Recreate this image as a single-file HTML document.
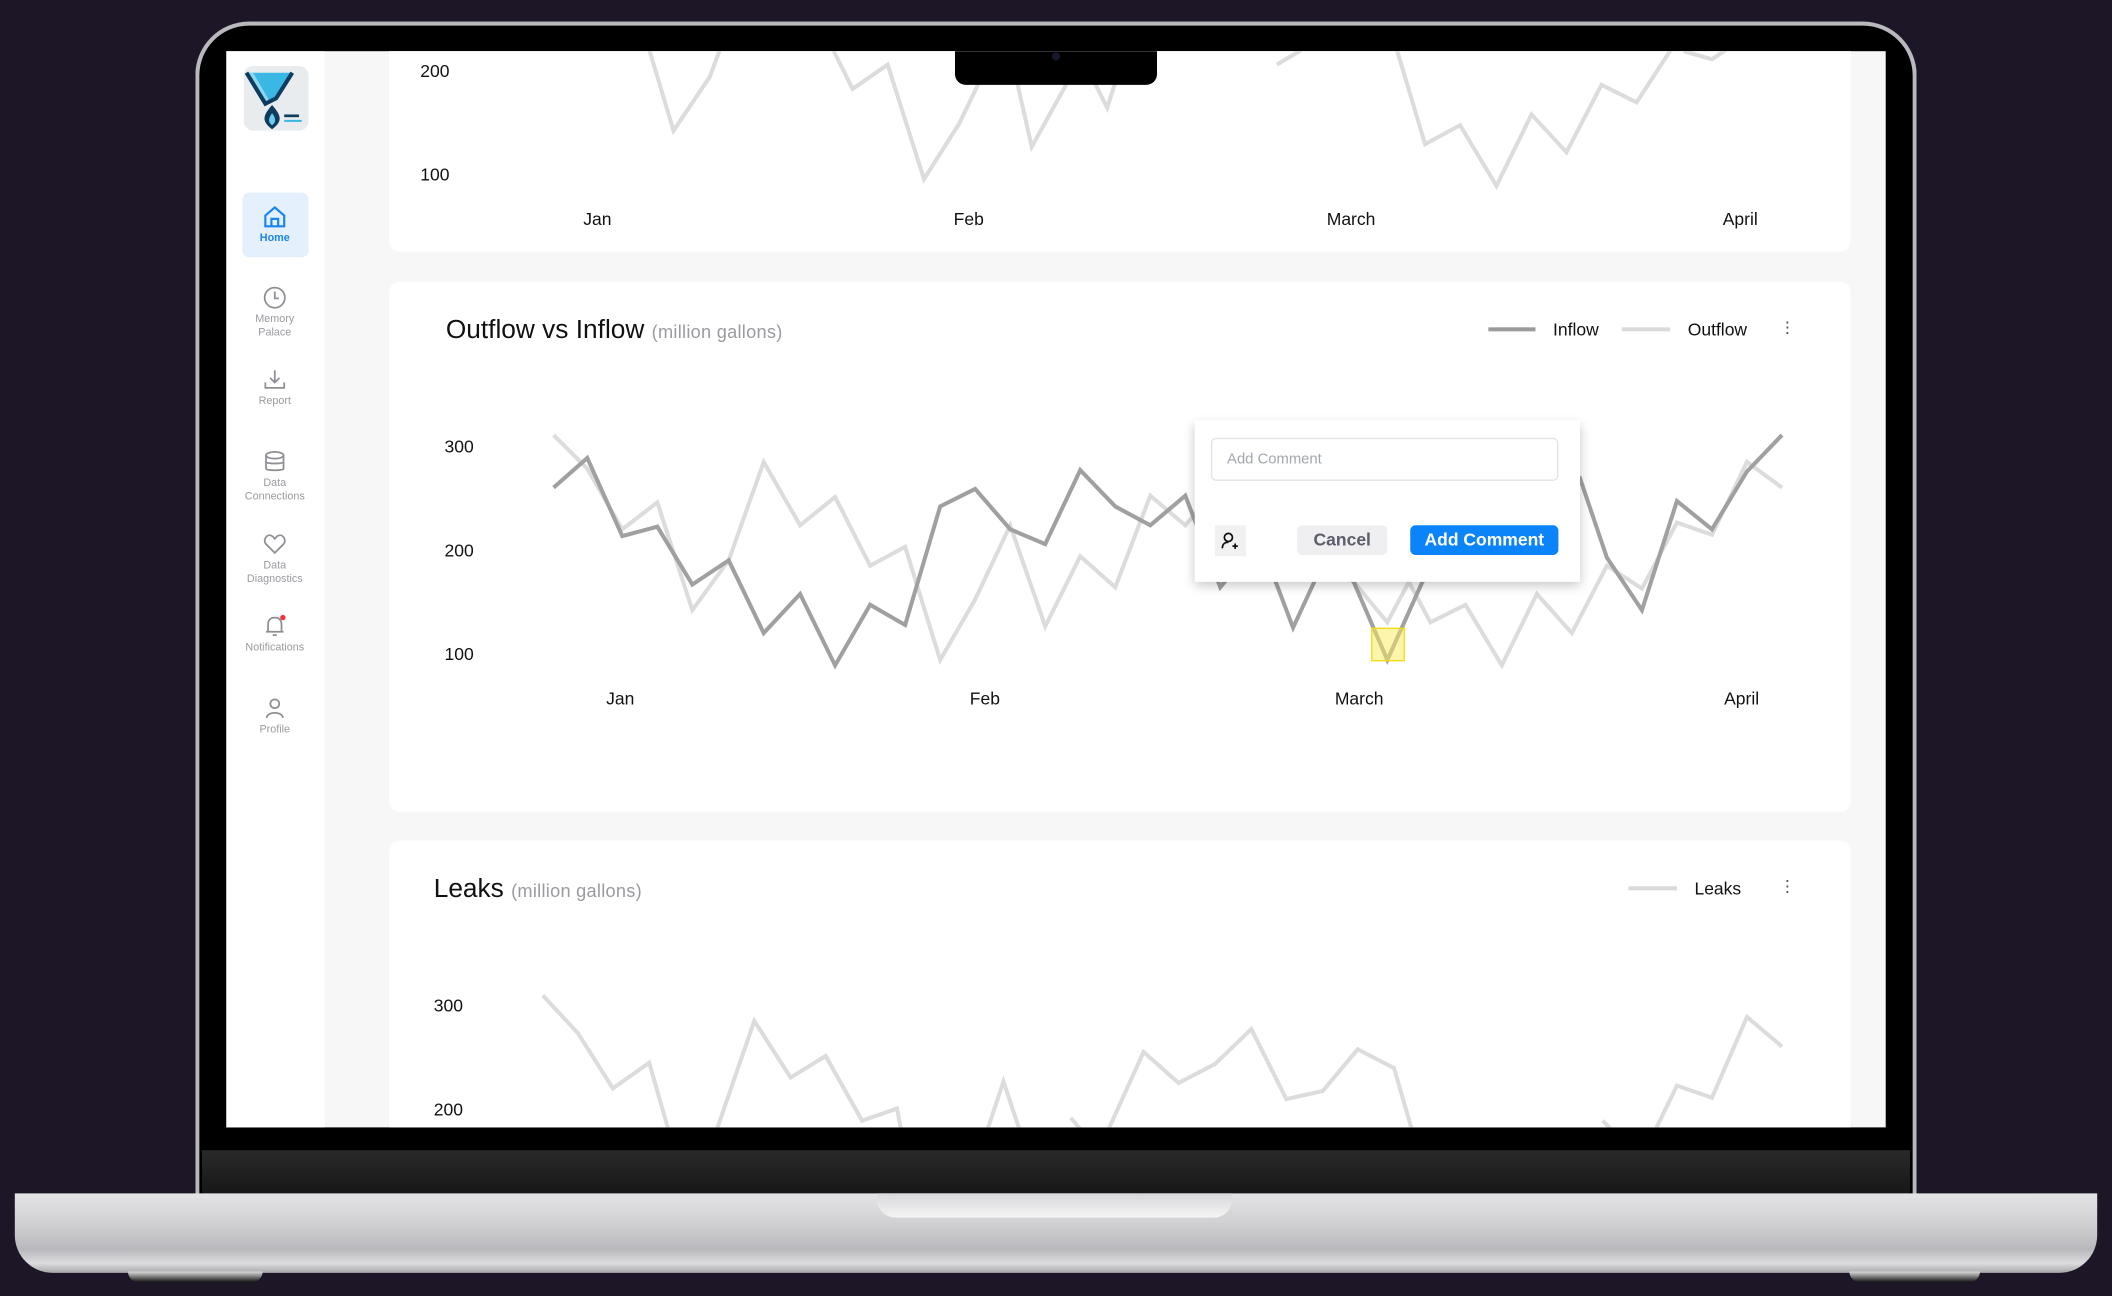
<!DOCTYPE html>
<html><head><meta charset="utf-8"><style>
*{margin:0;padding:0;box-sizing:border-box}
html,body{width:2112px;height:1296px;overflow:hidden;background:#1d1626}
#w{position:absolute;left:0;top:0;width:1568px;height:962px;transform:scale(1.346939);transform-origin:0 0;font-family:"Liberation Sans",sans-serif}
.a{position:absolute}
.lid{left:145px;top:16px;width:1278px;height:880px;border-radius:40px 40px 0 0;background:#000;border:3px solid #b9b9bd;border-bottom:none}
.scr{left:168px;top:38px;width:1232px;height:799px;overflow:hidden;background:#f7f7f7}
.in{position:absolute;left:-168px;top:-38px;width:1568px;height:962px}
.card{position:absolute;background:#fff;border-radius:8px;left:289px;width:1085px}
.t{position:absolute;font-size:13px;color:#111;white-space:nowrap}
.nav{position:absolute;left:172px;width:64px;text-align:center;font-size:8px;color:#9a9aa0;line-height:9.5px}
.nav svg{display:block;margin:0 auto 2px}
.sub{font-size:13.5px;color:#9a9aa0;letter-spacing:.2px}
</style></head><body><div id="w">
<div class="a lid"></div>
<div class="a" style="left:150px;top:854px;width:1268px;height:33px;background:linear-gradient(#2a2a2a,#161616)"></div>
<div class="a" style="left:11px;top:886px;width:1546px;height:59px;border-radius:0 0 28px 28px;background:linear-gradient(#e4e4e6,#cfcfd2 40%,#b9b9bd 70%,#dcdcde 88%,#a8a8ac)"></div>
<div class="a" style="left:651px;top:886px;width:264px;height:18px;border-radius:0 0 14px 14px;background:linear-gradient(#d8d8da,#f4f4f5)"></div>
<div class="a" style="left:95px;top:944px;width:100px;height:8px;border-radius:0 0 8px 8px;background:linear-gradient(#ddd,#111)"></div>
<div class="a" style="left:1373px;top:944px;width:97px;height:8px;border-radius:0 0 8px 8px;background:linear-gradient(#ddd,#111)"></div>
<div class="a scr"><div class="in">
 <div class="a" style="left:168px;top:38px;width:73px;height:800px;background:#fff"></div>
 <div class="a" style="left:181px;top:49px;width:48px;height:48px;border-radius:7px;background:#e9ecef;overflow:hidden">
  <svg width="48" height="48" viewBox="0 0 48 48"><path d="M2 5 L16 28 L24 22 L36 5Z" fill="#3bb7e6"/><path d="M2 5 L16 28 L19 26 L7 5Z" fill="#8fd6f0"/><path d="M2 5 L16 28 L24 24 L36 5" fill="none" stroke="#0d3c5e" stroke-width="3"/><path d="M21 29 C14 37 13 41 21 47 C29 41 28 37 21 29Z" fill="#0d3c5e"/><path d="M21 35 C18 39 18 42 21 44 C24 42 24 39 21 35Z" fill="#6ecbef"/><rect x="30" y="36" width="11" height="2" fill="#0d3c5e"/><rect x="30" y="40" width="13" height="1.5" fill="#3bb7e6"/></svg></div>
 <div class="a" style="left:180px;top:143px;width:49px;height:48px;border-radius:5px;background:#e4f0fc"></div>
 <div class="nav" style="top:152px;color:#1a84f0;font-weight:bold"><svg width="18" height="18" viewBox="0 0 18 18" fill="none" stroke="#1a84f0" stroke-width="1.6"><path d="M2 8 L9 2 L16 8 V16 H2Z"/><path d="M6.5 16 V10.5 H11.5 V16"/></svg>Home</div>
 <div class="nav" style="top:212px"><svg width="18" height="18" viewBox="0 0 18 18" fill="none" stroke="#8e8e95" stroke-width="1.3"><circle cx="9" cy="9" r="7.5"/><path d="M9 4.5V9.5H12"/></svg>Memory<br>Palace</div>
 <div class="nav" style="top:273px"><svg width="18" height="18" viewBox="0 0 18 18" fill="none" stroke="#8e8e95" stroke-width="1.3"><path d="M9 2V11M5.5 7.5L9 11L12.5 7.5M2 11V15H16V11"/></svg>Report</div>
 <div class="nav" style="top:334px"><svg width="18" height="18" viewBox="0 0 18 18" fill="none" stroke="#8e8e95" stroke-width="1.3"><ellipse cx="9" cy="4" rx="6.5" ry="2.5"/><path d="M2.5 4V14C2.5 15.5 15.5 15.5 15.5 14V4M2.5 9C2.5 10.5 15.5 10.5 15.5 9"/></svg>Data<br>Connections</div>
 <div class="nav" style="top:395px"><svg width="18" height="18" viewBox="0 0 18 18" fill="none" stroke="#8e8e95" stroke-width="1.3"><path d="M9 15.5L2.5 9C0 6 3 1.5 6 2.5C7.5 3 9 5 9 5C9 5 10.5 3 12 2.5C15 1.5 18 6 15.5 9Z"/></svg>Data<br>Diagnostics</div>
 <div class="nav" style="top:456px"><svg width="18" height="18" viewBox="0 0 18 18" fill="none" stroke="#8e8e95" stroke-width="1.3"><path d="M4 13V8C4 4 6 2.5 9 2.5S14 4 14 8V13H15.5H2.5Z"/><path d="M7.5 15.5H10.5"/><circle cx="15" cy="2.5" r="2" fill="#f0333a" stroke="none"/></svg>Notifications</div>
 <div class="nav" style="top:517px"><svg width="18" height="18" viewBox="0 0 18 18" fill="none" stroke="#8e8e95" stroke-width="1.3"><circle cx="9" cy="5.5" r="3.3"/><path d="M3 16C3 11 15 11 15 16"/></svg>Profile</div>

 <div class="card" style="top:20px;height:167px"></div>
 <div class="card" style="top:209px;height:394px"></div>
 <div class="card" style="top:624px;height:260px"></div>

 <div class="t" style="left:312px;top:45px">200</div>
 <div class="t" style="left:312px;top:122px">100</div>
 <div class="t" style="left:433px;top:155px">Jan</div>
 <div class="t" style="left:708px;top:155px">Feb</div>
 <div class="t" style="left:985px;top:155px">March</div>
 <div class="t" style="left:1279px;top:155px">April</div>

 <div class="t" style="left:331px;top:234px;font-size:19.5px">Outflow vs Inflow <span class="sub">(million gallons)</span></div>
 <div class="a" style="left:1105px;top:243px;width:35px;height:3px;background:#9a9a9a"></div>
 <div class="t" style="left:1153px;top:237px">Inflow</div>
 <div class="a" style="left:1204px;top:243px;width:36px;height:3px;background:#dadada"></div>
 <div class="t" style="left:1253px;top:237px">Outflow</div>
 <div class="t" style="left:1325px;top:233px;font-size:14px;color:#555;line-height:4px">.<br>.<br>.</div>
 <div class="t" style="left:330px;top:324px">300</div>
 <div class="t" style="left:330px;top:401px">200</div>
 <div class="t" style="left:330px;top:478px">100</div>
 <div class="t" style="left:450px;top:511px">Jan</div>
 <div class="t" style="left:720px;top:511px">Feb</div>
 <div class="t" style="left:991px;top:511px">March</div>
 <div class="t" style="left:1280px;top:511px">April</div>

 <div class="t" style="left:322px;top:649px;font-size:19.5px">Leaks <span class="sub">(million gallons)</span></div>
 <div class="a" style="left:1209px;top:658px;width:36px;height:3px;background:#dadada"></div>
 <div class="t" style="left:1258px;top:652px">Leaks</div>
 <div class="t" style="left:1325px;top:648px;font-size:14px;color:#555;line-height:4px">.<br>.<br>.</div>
 <div class="t" style="left:322px;top:739px">300</div>
 <div class="t" style="left:322px;top:816px">200</div>

 <svg class="a" style="left:0;top:0" width="1568" height="962" fill="none" stroke-linejoin="miter" stroke-width="3">
  <g stroke="#dcdcdc">
   <polyline points="480,30 500,97 527,57 537,30"/>
   <polyline points="615,30 633,66 659,48 686,133 712,92 742,30"/>
   <polyline points="748,30 766,109 792,62 808,30"/>
   <polyline points="812,60 822,80 838,30"/>
   <polyline points="948,48 978,30"/>
   <polyline points="1035,30 1058,107 1084,93 1111,138 1137,85 1163,113 1189,63 1215,76 1245,30"/>
   <polyline points="1250,38 1271,44 1292,30"/>
   <polyline points="411,323 436,348 462,393 488,373 514,453 541,416 567,343 594,390 620,369 646,420 672,406 698,490 724,445 750,390 776,465 802,413 828,436 854,368 880,390 906,360 935,420 960,400 985,412 1005,432 1030,462 1046,432 1062,462 1088,449 1115,494 1141,441 1167,470 1193,420 1219,437 1245,388 1271,397 1297,343 1323,362"/>
   <polyline points="403,739 429,767 455,808 482,789 498,845"/>
   <polyline points="530,845 560,758 587,800 613,784 640,832 666,823 670,845"/>
   <polyline points="731,845 745,803 759,845"/>
   <polyline points="795,830 808,845"/>
   <polyline points="820,845 849,781 875,804 902,790 929,764 955,816 982,810 1008,779 1035,793 1050,845"/>
   <polyline points="1190,832 1202,845"/>
   <polyline points="1226,845 1245,806 1271,815 1297,755 1323,777"/>
  </g>
  <polyline stroke="#a0a0a0" points="411,362 436,340 462,398 488,391 514,434 541,416 567,470 594,441 620,494 646,449 672,464 698,376 724,363 750,393 776,404 802,349 828,376 854,390 880,368 906,436 935,400 960,466 985,412 1005,432 1030,490 1056,432 1100,380 1173,355 1193,414 1219,453 1245,372 1271,393 1297,350 1323,323"/>
 </svg>
 <div class="a" style="left:1018px;top:466px;width:25px;height:25px;border:1.5px solid #f2dc16;background:rgba(252,236,90,.5)"></div>

 <div class="a" style="left:887px;top:312px;width:286px;height:120px;background:#fff;box-shadow:0 3px 8px rgba(0,0,0,.22)">
  <div class="a" style="left:12px;top:13px;width:258px;height:32px;border:1px solid #e3e3e8;border-radius:4px;font-size:11px;color:#a2a6b0;padding:9px 0 0 11px">Add Comment</div>
  <div class="a" style="left:15px;top:78px;width:23px;height:23px;background:#f1f1f2"><svg width="23" height="23" viewBox="0 0 23 23" fill="none" stroke="#111" stroke-width="1.3"><circle cx="10" cy="9" r="3"/><path d="M5.5 17C5.5 13.5 8 12.5 10 12.5M13 15.5H17M15 13.5V17.5"/></svg></div>
  <div class="a" style="left:76px;top:78px;width:67px;height:22px;background:#efeff2;border-radius:4px;font-size:13px;font-weight:bold;color:#5a5e6a;text-align:center;line-height:22px">Cancel</div>
  <div class="a" style="left:160px;top:78px;width:110px;height:22px;background:#0a84f8;border-radius:4px;font-size:13px;font-weight:bold;color:#fff;text-align:center;line-height:22px">Add Comment</div>
 </div>
 <div class="a" style="left:709px;top:38px;width:150px;height:25px;background:#000;border-radius:0 0 8px 8px"></div>
 <div class="a" style="left:781px;top:39px;width:6px;height:6px;border-radius:50%;background:#141a2a"></div>
</div></div>
</div></body></html>
